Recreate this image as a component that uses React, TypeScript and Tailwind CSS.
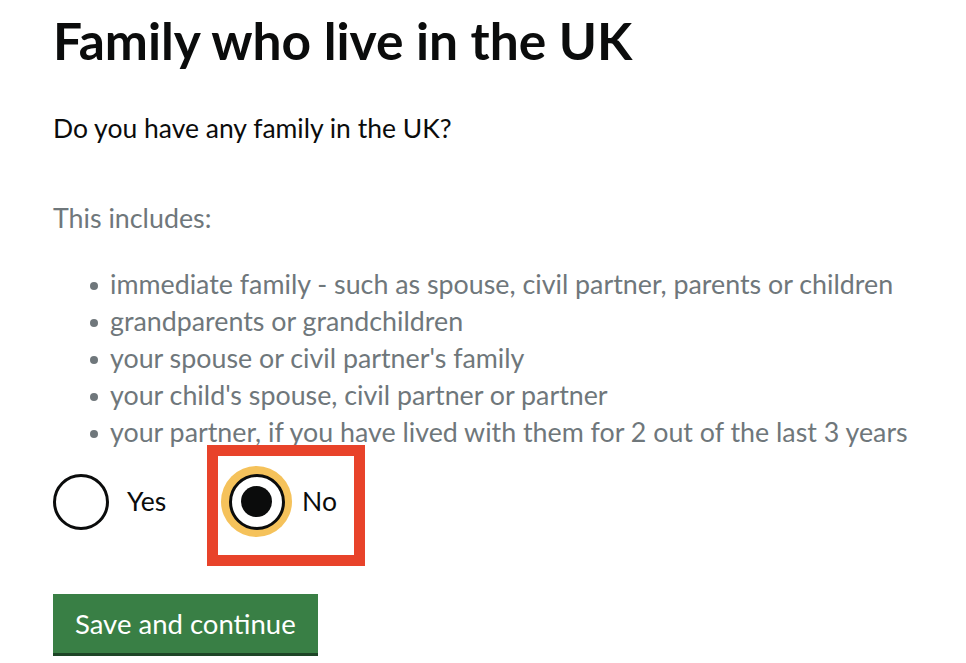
import React from 'react';

const items = [
  'immediate family - such as spouse, civil partner, parents or children',
  'grandparents or grandchildren',
  "your spouse or civil partner's family",
  "your child's spouse, civil partner or partner",
  'your partner, if you have lived with them for 2 out of the last 3 years',
];

const App: React.FC = () => {
  return (
    <div className="min-h-[663px] bg-white pl-[53px] pt-[8px] font-['Lato',sans-serif] text-[#0b0c0c]">
      {/* Page heading */}
      <h1 className="text-[51.5px] font-bold leading-[64px]">Family who live in the UK</h1>

      {/* Question */}
      <p className="mt-[38px] text-[26.5px] leading-[36px]">Do you have any family in the UK?</p>

      {/* Hint */}
      <div className="mt-[54px] text-[26.8px] leading-[36px] text-[#6f777b]">
        <p>This includes:</p>
        <ul className="mt-[30px] pl-[37px]">
          {items.map(item => (
            <li key={item} className="flex items-start leading-[37px]">
              <span className="mr-[12px] mt-[16px] h-[8px] w-[8px] shrink-0 rounded-full bg-[#6f777b]"></span>
              <span>{item}</span>
            </li>
          ))}
        </ul>
      </div>

      {/* Radios */}
      <div className="-mt-[6px] flex items-start">
        <label className="mt-[29px] flex items-center">
          <span className="h-[56px] w-[56px] rounded-full border-[3px] border-[#0b0c0c] bg-white"></span>
          <span className="ml-[18px] text-[26.5px]">Yes</span>
        </label>
        <div className="ml-[41px] border-[11px] border-[#e8432a] pb-[18px] pl-[3px] pr-[17px] pt-[10px]">
          <label className="flex items-center">
            <span className="flex h-[71px] w-[71px] items-center justify-center rounded-full bg-[#f5c25b]">
              <span className="flex h-[56px] w-[56px] items-center justify-center rounded-full border-[3px] border-[#0b0c0c] bg-white">
                <span className="h-[31px] w-[31px] rounded-full bg-[#0b0c0c]"></span>
              </span>
            </span>
            <span className="ml-[10px] text-[26.5px]">No</span>
          </label>
        </div>
      </div>

      {/* Submit */}
      <button className="mt-[28px] h-[62px] border-b-[3px] border-[#1d4526] bg-[#397f45] px-[22px] text-[27.5px] leading-[59px] text-white">
        Save and continue
      </button>
    </div>
  );
};

export default App;
